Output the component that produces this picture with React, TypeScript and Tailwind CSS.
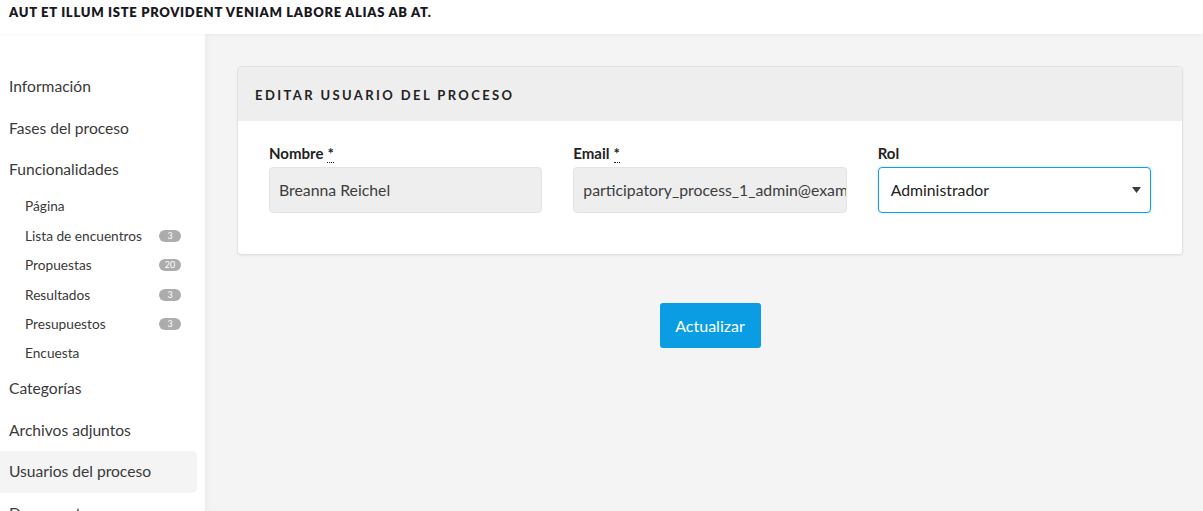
import React from "react";

const font = { fontFamily: "Lato, 'Noto Sans', sans-serif" };

interface NavItem {
  name: string;
  count?: number;
  active?: boolean;
}

const topItems: NavItem[] = [
  { name: "Información" },
  { name: "Fases del proceso" },
  { name: "Funcionalidades" },
];

const subItems: NavItem[] = [
  { name: "Página" },
  { name: "Lista de encuentros", count: 3 },
  { name: "Propuestas", count: 20 },
  { name: "Resultados", count: 3 },
  { name: "Presupuestos", count: 3 },
  { name: "Encuesta" },
];

const bottomItems: NavItem[] = [
  { name: "Categorías" },
  { name: "Archivos adjuntos" },
  { name: "Usuarios del proceso", active: true },
  { name: "Documentos" },
];

function MainLink({ item }: { item: NavItem }) {
  return (
    <div
      className={`h-[41.5px] flex items-center pl-[9px] text-[15.6px] text-[#3a3a3a] rounded-r-[5px] w-[197px] ${
        item.active ? "bg-[#f4f4f4]" : ""
      }`}
    >
      {item.name}
    </div>
  );
}

function SubLink({ item }: { item: NavItem }) {
  return (
    <div className="h-[29.4px] flex items-center justify-between pl-[25px] pr-[24px] text-[13.7px] text-[#3a3a3a]">
      <span>{item.name}</span>
      {item.count !== undefined && (
        <span className="w-[22px] h-[12px] rounded-full bg-[#acacac] text-white text-[9px] leading-[12px] text-center">
          {item.count}
        </span>
      )}
    </div>
  );
}

function Field({
  label,
  required,
  value,
}: {
  label: string;
  required?: boolean;
  value: string;
}) {
  return (
    <div className="flex flex-col min-w-0">
      <label className="h-[20px] mb-[4px] text-[15px] font-bold text-[#222] leading-[20px]">
        {label}
        {required && (
          <span className="ml-[4px] border-b border-dotted border-[#222]">*</span>
        )}
      </label>
      <div className="h-[46px] bg-[#eeeeee] border border-[#e3e3e3] rounded-[4px] px-[9px] flex items-center text-[15.8px] text-[#3d3d3d] overflow-hidden whitespace-nowrap">
        {value}
      </div>
    </div>
  );
}

export default function App() {
  return (
    <div className="w-[1203px] h-[511px] overflow-hidden bg-white flex flex-col" style={font}>
      <header className="h-[34px] shrink-0 bg-white pl-[9px] pt-[3px] relative z-10 shadow-[0_1px_3px_rgba(0,0,0,0.04)]">
        <h1 className="text-[13px] font-extrabold tracking-[0.7px] text-[#1a181d] leading-[18px]">
          AUT ET ILLUM ISTE PROVIDENT VENIAM LABORE ALIAS AB AT.
        </h1>
      </header>
      <div className="flex flex-1 min-h-0">
        <aside className="w-[205px] shrink-0 bg-white pt-[32px]">
          {topItems.map((item) => (
            <MainLink key={item.name} item={item} />
          ))}
          <div className="pt-[1.5px]">
            {subItems.map((item) => (
              <SubLink key={item.name} item={item} />
            ))}
          </div>
          {bottomItems.map((item) => (
            <MainLink key={item.name} item={item} />
          ))}
        </aside>
        <main className="flex-1 bg-[#f4f4f4] pl-[32px] pr-[20px] pt-[32px] shadow-[inset_6px_0_8px_-6px_rgba(0,0,0,0.06)]">
          <section className="bg-white border border-[#e2e2e2] rounded-[4px] shadow-[0_1px_2px_rgba(0,0,0,0.06)] overflow-hidden">
            <div className="h-[54px] bg-[#eeeeee] flex items-center pl-[17px] pt-[3px]">
              <h2 className="text-[13px] font-bold tracking-[2.4px] text-[#222]">
                EDITAR USUARIO DEL PROCESO
              </h2>
            </div>
            <div className="grid grid-cols-3 gap-[31px] px-[31px] pt-[22px] pb-[41px]">
              <Field label="Nombre" required value="Breanna Reichel" />
              <Field label="Email" required value="participatory_process_1_admin@example.org" />
              <div className="flex flex-col min-w-0">
                <label className="h-[20px] mb-[4px] text-[15px] font-bold text-[#222] leading-[20px]">
                  Rol
                </label>
                <div className="h-[46px] bg-white border border-[#1a9be3] rounded-[4px] pl-[12px] pr-[9px] flex items-center justify-between text-[15.8px] text-[#222] shadow-[0_0_3px_rgba(26,155,227,0.3)]">
                  <span>Administrador</span>
                  <svg width="9" height="6" viewBox="0 0 9 6">
                    <path d="M0 0h9L4.5 6z" fill="#3b3b45" />
                  </svg>
                </div>
              </div>
            </div>
          </section>
          <div className="flex justify-center mt-[48px]">
            <button className="w-[101px] h-[45px] rounded-[3px] bg-[#0a9de3] text-white text-[16px]">
              Actualizar
            </button>
          </div>
        </main>
      </div>
    </div>
  );
}
